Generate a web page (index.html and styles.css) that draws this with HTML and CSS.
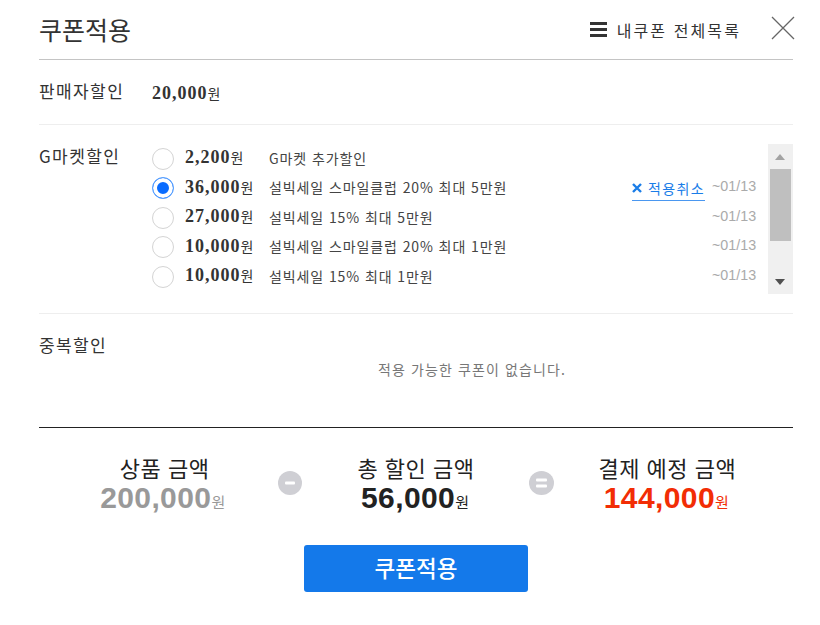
FILE: index.html
```html
<!DOCTYPE html>
<html lang="ko">
<head>
    <title>쿠폰적용</title>
    <link rel="stylesheet" href="styles.css">
</head>
<body>
    <div class="container">
        <div class="header">
            <h2>쿠폰적용</h2>
            <a class="all-link">
                <span class="burger"><i></i><i></i><i></i></span>
                내쿠폰 전체목록
            </a>
            <svg class="close" width="24" height="24" viewBox="0 0 24 24">
                <path d="M1 1L23 23M23 1L1 23" stroke="#666" stroke-width="1.3" fill="none"/>
            </svg>
        </div>

        <div class="section seller">
            <div class="section-title">판매자할인</div>
            <div class="price"><b>20,000</b>원</div>
        </div>

        <div class="section gmarket">
            <div class="section-title">G마켓할인</div>
            <div class="coupon-list">
                <div class="coupon">
                    <span class="radio"></span>
                    <span class="amount"><b>2,200</b>원</span>
                    <span class="name">G마켓 추가할인</span>
                </div>
                <div class="coupon">
                    <span class="radio checked"></span>
                    <span class="amount"><b>36,000</b>원</span>
                    <span class="name">설빅세일 스마일클럽 20% 최대 5만원</span>
                    <a class="cancel">
                        <svg width="10" height="10" viewBox="0 0 10 10"><path d="M1 1L9 9M9 1L1 9" stroke="#1a7de8" stroke-width="2.4"/></svg>
                        적용취소
                    </a>
                    <span class="date">~01/13</span>
                </div>
                <div class="coupon">
                    <span class="radio"></span>
                    <span class="amount"><b>27,000</b>원</span>
                    <span class="name">설빅세일 15% 최대 5만원</span>
                    <span class="date">~01/13</span>
                </div>
                <div class="coupon">
                    <span class="radio"></span>
                    <span class="amount"><b>10,000</b>원</span>
                    <span class="name">설빅세일 스마일클럽 20% 최대 1만원</span>
                    <span class="date">~01/13</span>
                </div>
                <div class="coupon">
                    <span class="radio"></span>
                    <span class="amount"><b>10,000</b>원</span>
                    <span class="name">설빅세일 15% 최대 1만원</span>
                    <span class="date">~01/13</span>
                </div>
            </div>
            <div class="scrollbar">
                <span class="arrow-up"></span>
                <span class="thumb"></span>
                <span class="arrow-down"></span>
            </div>
        </div>

        <div class="section dup">
            <div class="section-title">중복할인</div>
            <p class="empty">적용 가능한 쿠폰이 없습니다.</p>
        </div>

        <div class="summary">
            <div class="sum-item">
                <div class="sum-label">상품 금액</div>
                <div class="sum-value gray"><b>200,000</b>원</div>
            </div>
            <span class="op">
                <svg width="24" height="24" viewBox="0 0 24 24"><circle cx="12" cy="12" r="12" fill="#cfcfd4"/><rect x="7" y="10.5" width="10" height="3" rx="1" fill="#fff"/></svg>
            </span>
            <div class="sum-item">
                <div class="sum-label">총 할인 금액</div>
                <div class="sum-value"><b>56,000</b>원</div>
            </div>
            <span class="op">
                <svg width="25" height="24" viewBox="0 0 25 24"><ellipse cx="12.5" cy="12" rx="12.5" ry="12" fill="#cfcfd4"/><rect x="7" y="7.5" width="11" height="3" rx="1" fill="#fff"/><rect x="7" y="13.5" width="11" height="3" rx="1" fill="#fff"/></svg>
            </span>
            <div class="sum-item">
                <div class="sum-label">결제 예정 금액</div>
                <div class="sum-value red"><b>144,000</b>원</div>
            </div>
        </div>

        <button class="apply">쿠폰적용</button>
    </div>
</body>
</html>
```

FILE: styles.css
```css
* {
    box-sizing: border-box;
}
body {
    margin: 0;
    background: #fff;
    color: #222;
    font-family: "Noto Sans CJK KR", "Noto Sans", sans-serif;
}
.container {
    width: 754px;
    margin-left: 39px;
}
.header {
    height: 60px;
    display: flex;
    align-items: center;
    border-bottom: 1px solid #c4c4c4;
    position: relative;
    padding-bottom: 2px;
}
.header h2 {
    margin: 0;
    font-size: 25px;
    font-weight: 400;
    color: #333;
    flex: 1;
}
.all-link {
    display: flex;
    align-items: center;
    gap: 10px;
    font-size: 16px;
    letter-spacing: 2.1px;
    color: #333;
    margin-right: 52px;
    margin-top: 2px;
}
.burger {
    display: flex;
    flex-direction: column;
    gap: 3px;
    width: 17px;
}
.burger i {
    height: 3px;
    background: #333;
}
.close {
    position: absolute;
    right: -2px;
    top: 16px;
}
.section {
    display: flex;
    border-bottom: 1px solid #eee;
}
.section-title {
    width: 113px;
    font-size: 17px;
    letter-spacing: 1.4px;
    line-height: 24px;
    color: #333;
}
.seller {
    height: 65px;
    padding-top: 19px;
}
.price {
    font-size: 14px;
    line-height: 29px;
    color: #333;
}
.price b,
.amount b {
    font-family: "Liberation Serif", serif;
    font-size: 18px;
    letter-spacing: 1px;
    font-weight: 700;
}
.gmarket {
    height: 189px;
    padding-top: 19px;
    position: relative;
}
.coupon-list {
    flex: 1;
    padding-right: 35px;
}
.coupon {
    height: 29.5px;
    display: flex;
    align-items: center;
    font-size: 14px;
    color: #333;
}
.radio {
    width: 22px;
    height: 22px;
    border-radius: 50%;
    border: 1px solid #d4d4d4;
    margin-right: 11px;
    background: #fff;
}
.radio.checked {
    border: 1px solid #5aa2ff;
    box-shadow: inset 0 0 0 4px #fff;
    background: #0a6cff;
}
.amount {
    width: 84px;
    position: relative;
    top: -1px;
}
.name {
    flex: 1;
    font-size: 14px;
    letter-spacing: 0.9px;
    color: #444;
    position: relative;
    top: -1px;
}
.cancel {
    display: flex;
    align-items: center;
    gap: 6px;
    font-size: 14px;
    letter-spacing: 1.4px;
    color: #1a7de8;
    border-bottom: 1px solid #4a97f0;
    height: 25px;
    margin-right: 8px;
}
.date {
    width: 45px;
    font-family: "Liberation Sans", sans-serif;
    font-size: 14.3px;
    color: #aaa;
    position: relative;
    top: -2px;
    left: -1px;
}
.scrollbar {
    position: absolute;
    right: 0;
    top: 19px;
    width: 25px;
    height: 150px;
    background: #f0f0f0;
    padding: 0 2px;
}
.thumb {
    position: absolute;
    left: 2px;
    top: 25px;
    width: 21px;
    height: 72px;
    background: #bfbfbf;
}
.arrow-up,
.arrow-down {
    position: absolute;
    left: 7px;
    width: 0;
    height: 0;
    border-left: 5.5px solid transparent;
    border-right: 5.5px solid transparent;
}
.arrow-up {
    top: 10px;
    border-bottom: 6px solid #a3a3a3;
}
.arrow-down {
    bottom: 9px;
    border-top: 6px solid #505050;
}
.dup {
    height: 114px;
    padding-top: 19px;
    border-bottom: 1px solid #222;
    position: relative;
}
.empty {
    position: absolute;
    left: 0;
    right: 0;
    top: 45px;
    margin: 0;
    text-align: center;
    font-size: 14px;
    letter-spacing: 1.1px;
    color: #777;
    padding-left: 112px;
}
.summary {
    display: flex;
    align-items: center;
    height: 117px;
    padding-bottom: 3px;
}
.sum-item {
    text-align: center;
    flex: 1;
}
.sum-label {
    font-size: 22px;
    letter-spacing: 0.5px;
    line-height: 30px;
    color: #222;
}
.sum-value {
    font-size: 15px;
    line-height: 32px;
    color: #222;
    padding-right: 2px;
}
.sum-value b {
    font-family: "Liberation Sans", sans-serif;
    font-size: 30px;
    letter-spacing: 0.4px;
    font-weight: 700;
}
.gray {
    color: #999;
    padding-right: 4px;
}
.red { color: #f22d05; }
.op {
    display: flex;
    justify-content: center;
    width: 0;
    margin-top: -5px;
}
.op svg {
    flex-shrink: 0;
}
.apply {
    display: block;
    width: 224px;
    height: 47px;
    margin-left: 265px;
    padding-bottom: 5px;
    background: #1479ea;
    color: #fff;
    border: none;
    border-radius: 3px;
    font-family: inherit;
    font-size: 22.5px;
    font-weight: 500;
}
```
